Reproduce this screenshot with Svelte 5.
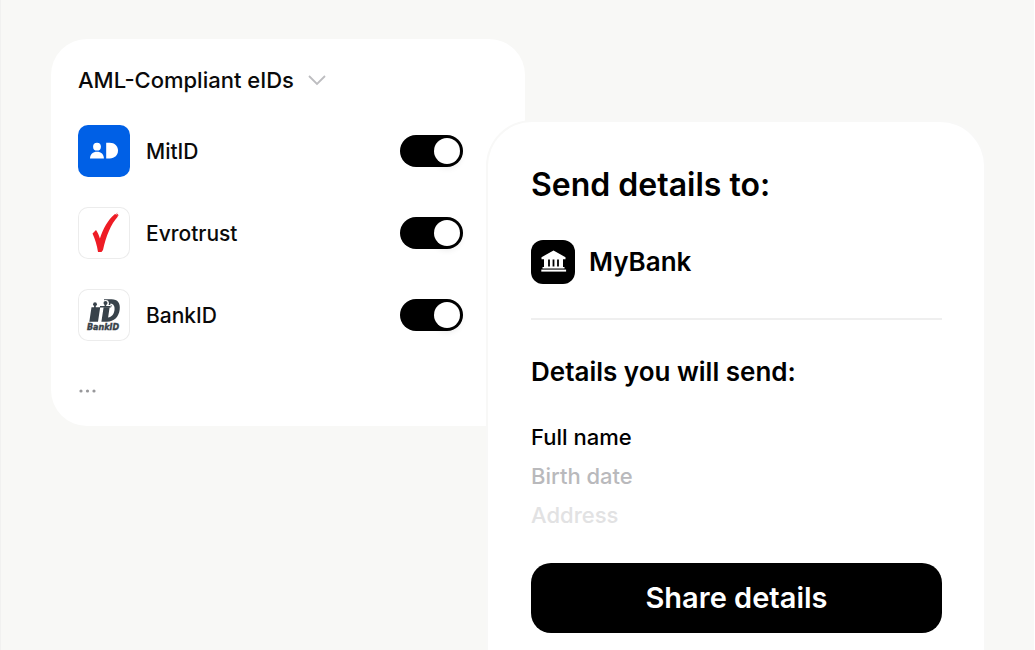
<script>
  let providers = $state([
    { id: 'mitid', name: 'MitID', on: true },
    { id: 'evrotrust', name: 'Evrotrust', on: true },
    { id: 'bankid', name: 'BankID', on: true },
  ]);
</script>

<main class="stage">
  <section class="card providers">
    <button class="heading" type="button">
      AML-Compliant eIDs
      <svg width="18" height="12" viewBox="0 0 18 12" aria-hidden="true">
        <path d="M1 2l8 8 8-8" fill="none" stroke="#bdbdc0" stroke-width="1.800" />
      </svg>
    </button>

    <ul class="list">
      {#each providers as p (p.id)}
        <li class="row">
          <span class="logo {p.id}">
            {#if p.id === 'mitid'}
              <svg viewBox="0 0 52 52" aria-hidden="true">
                <circle cx="19" cy="21.700" r="3.900" fill="#fff" />
                <path d="M12 33.500c0-4 3-6.700 7-6.700s6.900 2.700 6.900 6.700z" fill="#fff" />
                <path d="M28.200 17.700h3.500c5 0 8.300 3.300 8.300 7.900s-3.300 7.900-8.300 7.900h-3.500z" fill="#fff" />
              </svg>
            {:else if p.id === 'evrotrust'}
              <svg viewBox="0 0 52 52" aria-hidden="true">
                <path d="M14.500 26.500l3.500-3.500c1.800 2.500 3 5.500 3.900 8.500C25 22 30 12.500 37 7l1.200.6 1.800-.6-.3 2.700C33 17 28 29 25 43l-1.500 2h-3.500C19 38 17 32 14.500 26.500z" fill="#ee1c25" />
                <path d="M38 7l1.500-1M40 8.500l1-.500" stroke="#f5a0a4" stroke-width="1" />
              </svg>
            {:else}
              <svg viewBox="0 0 52 52" aria-hidden="true">
                <g fill="#38424a">
                  <circle cx="17" cy="15.200" r="1.900" />
                  <path d="M16.200 16h1.600v2.200h4.400L20 32.800H11.300L13.500 18.200H16z" />
                  <path d="M26 10.300h7.500c6.200 0 9 4 8.200 10.300-.9 7.500-5.700 12.200-12.700 12.200h-5.600l2.200-14.600h7l.3-2.300h-6.900z" />
                </g>
                <path d="M32.500 14.500c3.300.600 4.500 2.900 4 6.600-.6 4.300-2.800 7-6.400 7.400l1.500-10.300h1.600l.4-2.200h-1.400z" fill="#fff" />
                <circle cx="27.500" cy="14.300" r="3.400" fill="#fff" />
                <circle cx="27.500" cy="14.100" r="2" fill="#38424a" />
                <path d="M22 17.800h10.500M27.400 15v3" stroke="#38424a" stroke-width="1.600" />
                <text x="9" y="40.500">BankID</text>
              </svg>
            {/if}
          </span>
          <label for={p.id}>{p.name}</label>
          <input id={p.id} class="switch" type="checkbox" role="switch" bind:checked={p.on} />
        </li>
      {/each}
    </ul>

    <svg class="more" width="18" height="4" viewBox="0 0 18 4" role="img" aria-label="More">
      <circle cx="2" cy="2" r="1.600" />
      <circle cx="8.500" cy="2" r="1.600" />
      <circle cx="15" cy="2" r="1.600" />
    </svg>
  </section>

  <section class="card consent">
    <h1>Send details to:</h1>
    <div class="bank">
      <span class="bank-icon">
        <svg viewBox="0 0 44 44" aria-hidden="true">
          <path d="M22.500 10.500L34.500 17.200V19.200H32V27h1.500v1.400H11.500V27H13v-7.800H10.500V17.200z" fill="#fff" />
          <path d="M18 19.500V26.500M22.500 19.500V26.500M27 19.500V26.500" stroke="#000" stroke-width="1.800" />
          <path d="M10.300 30.600h24.800" stroke="#fff" stroke-width="2" />
        </svg>
      </span>
      MyBank
    </div>
    <hr />
    <h2>Details you will send:</h2>
    <ul class="details">
      <li>Full name</li>
      <li>Birth date</li>
      <li>Address</li>
    </ul>
    <button class="share" type="button">Share details</button>
  </section>
</main>

<style>
  :global(body) {
    margin: 0;
    background: #f8f8f6;
  }

  .stage {
    box-sizing: border-box;
    display: grid;
    grid-template-columns: 437fr 496fr;
    align-items: start;
    min-height: 100vh;
    padding: 39px 50px 0;
    border-left: 1px solid #f1f1f0;
    border-right: 1px solid #fff;
    overflow: hidden;
    font-family: Inter, "Liberation Sans", sans-serif;
    color: #0a0a0a;
  }

  .card {
    box-sizing: border-box;
    background: #fff;
  }

  .providers {
    margin-right: -37px;
    padding: 24px 62px 33px 27px;
    border-radius: 36px;
  }

  .heading {
    display: flex;
    align-items: center;
    gap: 14px;
    padding: 0;
    border: 0;
    background: none;
    font-family: inherit;
    font-size: 22px;
    line-height: 34px;
    font-weight: 500;
    color: inherit;
  }

  .list {
    display: grid;
    gap: 30px;
    margin: 28px 0 0;
    padding: 0;
    list-style: none;
  }

  .row {
    display: flex;
    align-items: center;
    gap: 16px;
    font-size: 21px;
    line-height: 29px;
    font-weight: 500;
  }

  .row label {
    flex: 1;
  }

  .logo {
    box-sizing: border-box;
    width: 52px;
    height: 52px;
    border-radius: 10px;
    overflow: hidden;
    box-shadow: inset 0 0 0 1px #ececec;
  }

  .logo svg {
    display: block;
  }

  .logo.mitid {
    background: #0060e6;
    box-shadow: none;
  }

  .logo text {
    font: italic 700 8px "DejaVu Sans", sans-serif;
    fill: #38424a;
    stroke: #38424a;
    stroke-width: 0.4px;
  }

  .switch {
    appearance: none;
    display: flex;
    align-items: center;
    box-sizing: border-box;
    width: 63px;
    height: 32px;
    margin: 0;
    padding: 3px;
    border-radius: 16px;
    background: #c8c8ca;
  }

  .switch::before {
    content: "";
    width: 26px;
    height: 26px;
    border-radius: 50%;
    background: #fff;
    box-shadow: 0 3px 7px rgba(0, 0, 0, 0.12);
  }

  .switch:checked {
    justify-content: flex-end;
    background: #000;
  }

  .more {
    display: block;
    margin-top: 48px;
    margin-left: 1px;
    fill: #98989b;
  }

  .consent {
    position: relative;
    align-self: stretch;
    margin-top: 83px;
    padding: 43px 42px 17px 43px;
    border-radius: 44px 44px 0 0;
    box-shadow: 0 0 0 2px #f8f8f7;
    color: #000;
  }

  h1,
  h2 {
    margin: 0;
    font-weight: 600;
  }

  h1 {
    font-size: 32px;
    line-height: 40px;
  }

  .bank {
    display: flex;
    align-items: center;
    gap: 14px;
    margin-top: 35px;
    font-size: 26px;
    line-height: 32px;
    font-weight: 600;
  }

  .bank-icon {
    width: 44px;
    height: 44px;
    border-radius: 12px;
    background: #000;
  }

  .bank-icon svg {
    display: block;
  }

  hr {
    height: 2px;
    margin: 34px 0 0;
    border: 0;
    background: #efefef;
  }

  h2 {
    margin-top: 36px;
    font-size: 26px;
    line-height: 32px;
  }

  .details {
    display: grid;
    gap: 8px;
    margin: 34px 0 0;
    padding: 0;
    list-style: none;
    font-size: 22px;
    line-height: 31px;
    font-weight: 500;
  }

  .details li:nth-child(2) {
    color: #b9b9bc;
  }

  .details li:nth-child(3) {
    color: #e2e2e3;
  }

  .share {
    width: 100%;
    margin-top: 32px;
    padding: 15px;
    border: 0;
    border-radius: 20px;
    background: #000;
    color: #fff;
    font-family: inherit;
    font-size: 29px;
    line-height: 40px;
    font-weight: 600;
  }
</style>
